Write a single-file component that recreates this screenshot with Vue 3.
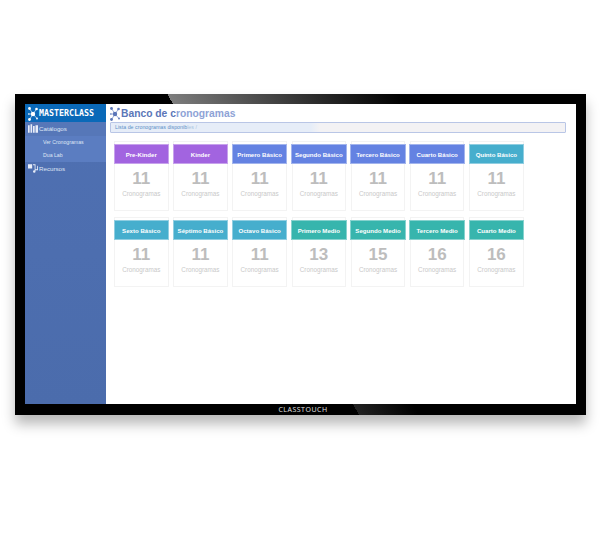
<template>
  <div class="page">
    <div class="monitor">
      <div class="screen">
        <aside class="sidebar">
          <div class="brand">
            <svg class="molecule" viewBox="0 0 10 15">
              <g stroke="#fff" stroke-width="0.6">
                <path d="M5 8 1.500 2.500M5 8l3.500-5M5 8 1.500 13.500M5 8l4 4.500M5 8H.8" />
              </g>
              <g fill="#fff">
                <circle cx="5" cy="8" r="2.200" />
                <circle cx="1.500" cy="2.500" r="1.400" />
                <circle cx="8.500" cy="3" r="1.300" />
                <circle cx="1.500" cy="13.500" r="1.400" />
                <circle cx="9" cy="12.500" r="0.900" />
                <circle cx="0.800" cy="8" r="0.800" />
              </g>
            </svg>
            <span class="brand-name">MASTERCLASS</span>
          </div>
          <div class="nav-item active">
            <svg class="nav-icon" viewBox="0 0 12 10">
              <path fill="#e8edf8" d="M0 1h2v9H0zM3 0h2v10H3zM6 2h2v8H6zM9 1h3v9H9z" />
            </svg>
            <span>Catálogos</span>
          </div>
          <div class="submenu">
            <div class="sub-item">Ver Cronogramas</div>
            <div class="sub-item">Dua Lab</div>
          </div>
          <div class="nav-item">
            <svg class="nav-icon" viewBox="0 0 12 10">
              <path fill="#e8edf8" d="M0 0h5v5H0zM6 0h3v6h2V1.500l1 1V7H9v1.500A1.500 1.500 0 1 1 7.500 7H8V1H6z" />
            </svg>
            <span>Recursos</span>
          </div>
        </aside>
        <main class="content">
          <div class="title-row">
            <svg class="molecule" viewBox="0 0 10 15">
              <g stroke="#5b76b8" stroke-width="0.6">
                <path d="M5 8 1.500 2.500M5 8l3.500-5M5 8 1.500 13.500M5 8l4 4.500M5 8H.8" />
              </g>
              <g fill="#5b76b8">
                <circle cx="5" cy="8" r="2.200" />
                <circle cx="1.500" cy="2.500" r="1.400" />
                <circle cx="8.500" cy="3" r="1.300" />
                <circle cx="1.500" cy="13.500" r="1.400" />
                <circle cx="9" cy="12.500" r="0.900" />
                <circle cx="0.800" cy="8" r="0.800" />
              </g>
            </svg>
            <h1>Banco de c<span>ronogramas</span></h1>
          </div>
          <div class="crumb">Lista de cronogramas disponib<span>les /</span></div>
          <div class="grid">
            <div v-for="c in courses" :key="c.name" class="card">
              <div class="card-head" :class="c.tone">{{ c.name }}</div>
              <div class="count">{{ c.count }}</div>
              <div class="count-label">Cronogramas</div>
            </div>
          </div>
        </main>
      </div>
      <div class="maker">CLASSTOUCH</div>
    </div>
  </div>
</template>

<script setup>
const courses = [
  { name: 'Pre-Kinder', count: 11, tone: 'purple' },
  { name: 'Kinder', count: 11, tone: 'purple' },
  { name: 'Primero Básico', count: 11, tone: 'blue' },
  { name: 'Segundo Básico', count: 11, tone: 'blue' },
  { name: 'Tercero Básico', count: 11, tone: 'blue' },
  { name: 'Cuarto Básico', count: 11, tone: 'blue' },
  { name: 'Quinto Básico', count: 11, tone: 'cyan' },
  { name: 'Sexto Básico', count: 11, tone: 'cyan' },
  { name: 'Séptimo Básico', count: 11, tone: 'cyan' },
  { name: 'Octavo Básico', count: 11, tone: 'cyan' },
  { name: 'Primero Medio', count: 13, tone: 'green' },
  { name: 'Segundo Medio', count: 15, tone: 'green' },
  { name: 'Tercero Medio', count: 16, tone: 'green' },
  { name: 'Cuarto Medio', count: 16, tone: 'green' },
];
</script>

<style>
html,
body {
  background: #fff;
}
</style>

<style scoped>
.page {
  width: 600px;
  height: 551px;
  padding: 94px 14px 0 15px;
  box-sizing: border-box;
  font-family: "Liberation Sans", Arial, sans-serif;
  overflow: hidden;
}

.monitor {
  height: 321px;
  padding: 10px 10px 0;
  box-sizing: border-box;
  display: flex;
  flex-direction: column;
  background-color: #000;
  background-image:
    linear-gradient(60deg, #000 27.4%, #7c7c7c 27.4%, #222 55.6%, #000 68%),
    linear-gradient(60deg, #000 59.6%, #222 59.6%, #000 70%);
  background-size: 100% 10px, 100% 11px;
  background-position: top, bottom;
  background-repeat: no-repeat;
  box-shadow: 0 9px 12px rgba(0, 0, 0, 0.28);
}

.screen {
  height: 300px;
  display: flex;
  background: #fff;
}

.maker {
  height: 11px;
  padding-left: 5px;
  font-family: "Open Sans", sans-serif;
  font-size: 7px;
  line-height: 11px;
  letter-spacing: 0.5px;
  text-align: center;
  color: #e4e4e4;
}

.sidebar {
  width: 81px;
  flex-shrink: 0;
  background: linear-gradient(#4f70b2, #4b6cac);
  color: #dfe6f5;
}

.brand {
  height: 18px;
  padding-left: 3px;
  display: flex;
  align-items: center;
  gap: 1px;
  background: #0a69b8;
}

.molecule {
  width: 10px;
  height: 15px;
  flex-shrink: 0;
}

.brand-name {
  font-family: "DejaVu Sans Mono", monospace;
  font-size: 8.3px;
  font-weight: 700;
  color: #fff;
}

.nav-item {
  height: 14px;
  padding: 0 0 2px 3px;
  box-sizing: border-box;
  display: flex;
  align-items: center;
  gap: 1px;
  font-size: 6.2px;
}

.nav-item.active {
  background: #5677b8;
}

.nav-icon {
  width: 10px;
  height: 9px;
}

.submenu {
  padding: 0 0 0 18px;
  background: #5b7dc1;
}

.sub-item {
  height: 13px;
  font-size: 5.2px;
  line-height: 13px;
}

.content {
  flex: 1;
  min-width: 0;
}

.title-row {
  height: 18px;
  padding-left: 4px;
  display: flex;
  align-items: center;
  gap: 1px;
}

h1 {
  margin: 0;
  font-size: 10.3px;
  font-weight: 700;
  color: #5b76b8;
}

h1 span {
  color: #8ea3d6;
}

.crumb {
  width: 456px;
  height: 11px;
  margin-left: 4px;
  padding-left: 4px;
  box-sizing: border-box;
  border: 1px solid #b9c6e6;
  border-radius: 1px;
  background: linear-gradient(90deg, #e6edf8 0%, #e6edf8 44%, #f3f2f4 46%);
  font-size: 5.3px;
  line-height: 9px;
  color: #5c8fc6;
}

.crumb span {
  color: #a9c4e0;
}

.grid {
  margin: 8px 0 0 8px;
  display: grid;
  grid-template-columns: repeat(7, 54.5px);
  column-gap: 4.7px;
  row-gap: 6px;
}

.card {
  height: 70px;
  box-sizing: border-box;
  border: 1px solid #f3f3f3;
  text-align: center;
}

.card-head {
  height: 20px;
  margin: 2px -1.500px 0;
  border: 0.5px solid rgba(255, 255, 255, 0.4);
  box-sizing: border-box;
  font-size: 6.1px;
  font-weight: 700;
  line-height: 19px;
  color: #fff;
}

.purple {
  background: #a264e0;
}

.blue {
  background: #6482e2;
}

.cyan {
  background: #46aecd;
}

.green {
  background: #37b5ad;
}

.count {
  margin-top: 5px;
  font-size: 17px;
  font-weight: 700;
  line-height: 19px;
  color: #bdbdbd;
}

.count-label {
  margin-top: 1px;
  font-size: 6.3px;
  line-height: 9px;
  color: #c9c9c9;
}
</style>
